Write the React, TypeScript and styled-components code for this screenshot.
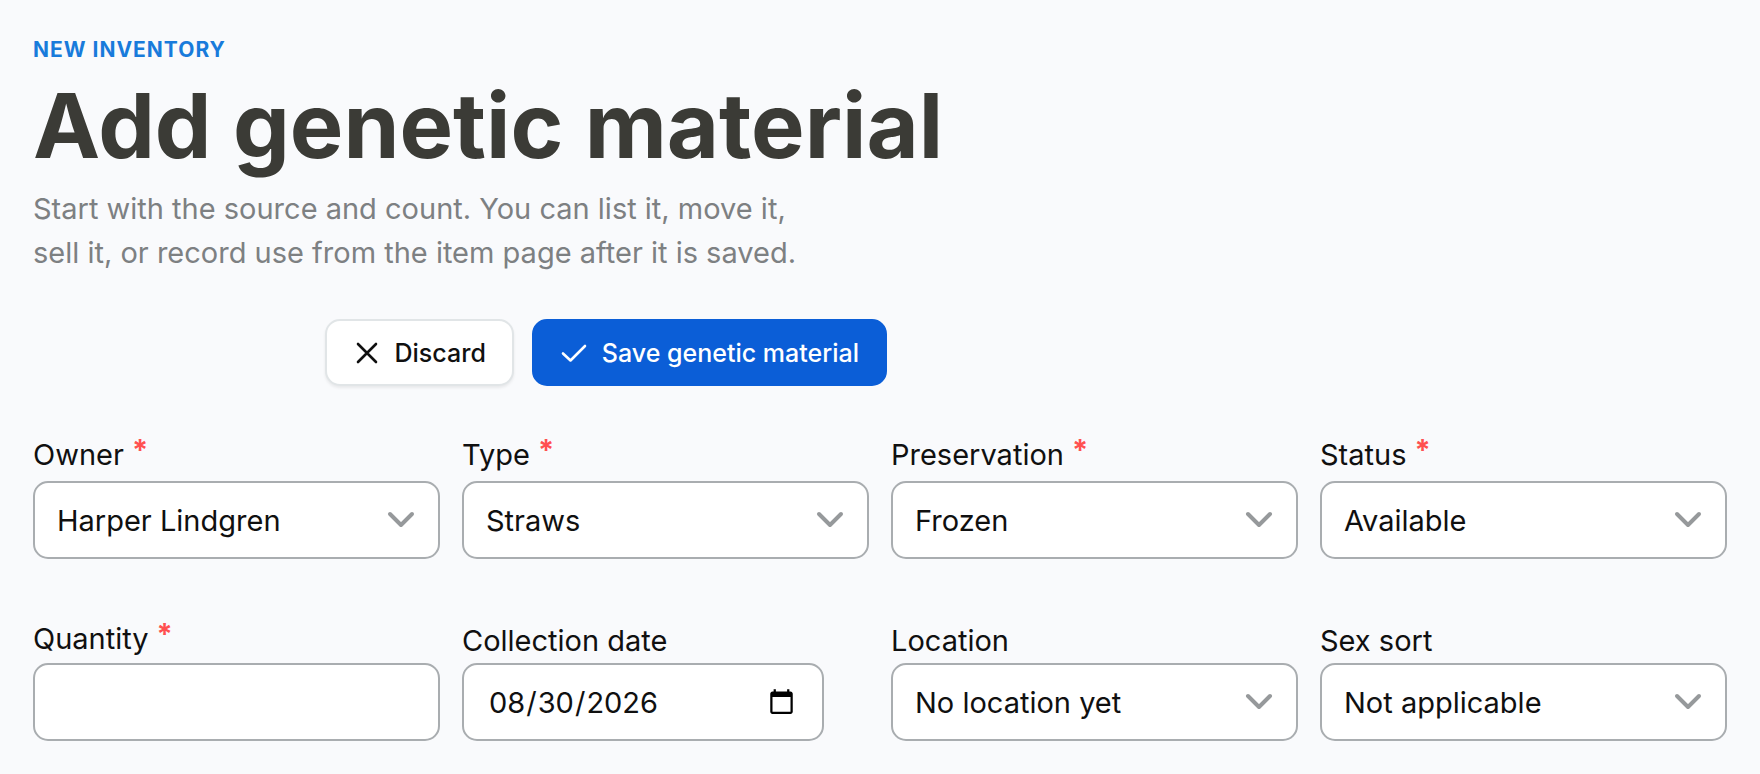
import React from "react";
import styled, { createGlobalStyle } from "styled-components";

const GlobalStyle = createGlobalStyle`
  *, *::before, *::after { box-sizing: border-box; }
  body {
    margin: 0;
    background: #f9fafc;
    color: #101010;
    font-family: Inter, "Liberation Sans", sans-serif;
    font-size: 29px;
  }
`;

const Page = styled.main`
  padding: 32px 33px;
`;

const Eyebrow = styled.p`
  margin: 0;
  color: #187bdb;
  font-size: 21px;
  line-height: 36px;
  font-weight: 700;
  letter-spacing: 1px;
  text-transform: uppercase;
`;

const Title = styled.h1`
  margin: 0;
  color: #3b3b36;
  font-size: 90px;
  line-height: 116px;
  font-weight: 700;
`;

const Lead = styled.p`
  margin: 3px 0 0;
  max-width: 780px;
  color: #7d8082;
  line-height: 44px;
`;

const Actions = styled.div`
  display: flex;
  justify-content: flex-end;
  gap: 18px;
  max-width: 854px;
  margin-top: 44px;
`;

const Button = styled.button<{ $primary?: boolean }>`
  display: flex;
  align-items: center;
  gap: 15px;
  height: 67px;
  padding: 0 26px 0 27px;
  border: 2px solid ${(p) => (p.$primary ? "#0b5ed7" : "#e1e5e7")};
  border-radius: 15px;
  background: ${(p) => (p.$primary ? "#0b5ed7" : "#ffffff")};
  box-shadow: ${(p) => (p.$primary ? "none" : "0 2px 3px rgba(0, 0, 0, 0.07)")};
  color: ${(p) => (p.$primary ? "#ffffff" : "#101010")};
  font-family: inherit;
  font-size: 25px;
  font-weight: 500;
  white-space: nowrap;
`;

const FieldRow = styled.div<{ $top: number }>`
  display: grid;
  grid-template-columns: repeat(4, minmax(0, 1fr));
  align-items: end;
  gap: 22px;
  margin-top: ${(p) => p.$top}px;
`;

const Field = styled.div<{ $gap: number }>`
  display: flex;
  flex-direction: column;
  gap: ${(p) => p.$gap}px;
`;

const Label = styled.label`
  display: flex;
  gap: 8px;
  line-height: 38px;
`;

const Required = styled.span`
  color: #ff5050;
  font-weight: 700;
  line-height: 28px;
`;

const Control = styled.div`
  position: relative;
`;

const Input = styled.input<{ $short?: boolean }>`
  display: block;
  width: ${(p) => (p.$short ? "89%" : "100%")};
  height: 78px;
  padding: 0 24px;
  border: 2px solid #a9adb0;
  border-radius: 15px;
  background: #ffffff;
  color: inherit;
  font: inherit;
`;

const Select = styled.select`
  display: block;
  width: 100%;
  height: 78px;
  padding: 0 70px 0 22px;
  appearance: none;
  border: 2px solid #a9adb0;
  border-radius: 15px;
  background: #ffffff;
  color: inherit;
  font: inherit;
`;

const Chevron = styled.svg`
  position: absolute;
  top: 30px;
  right: 25px;
  pointer-events: none;
`;

type SelectFieldProps = {
  id: string;
  label: string;
  value: string;
  required?: boolean;
  gap: number;
};

function FieldLabel({ id, text, required }: { id: string; text: string; required?: boolean }) {
  return (
    <Label htmlFor={id}>
      {text}
      {required && <Required>*</Required>}
    </Label>
  );
}

function SelectField({ id, label, value, required, gap }: SelectFieldProps) {
  return (
    <Field $gap={gap}>
      <FieldLabel id={id} text={label} required={required} />
      <Control>
        <Select id={id} defaultValue={value} required={required}>
          <option>{value}</option>
        </Select>
        <Chevron width="28" height="18" viewBox="0 0 28 18" fill="none" aria-hidden="true">
          <path d="M3 3L14 14L25 3" stroke="#96999b" strokeWidth="4" strokeLinecap="round" strokeLinejoin="round" />
        </Chevron>
      </Control>
    </Field>
  );
}

export default function App() {
  return (
    <>
      <GlobalStyle />
      <Page>
        <Eyebrow>New inventory</Eyebrow>
        <Title>Add genetic material</Title>
        <Lead>
          Start with the source and count. You can list it, move it, sell it, or record use from
          the item page after it is saved.
        </Lead>
        <form onSubmit={(e) => e.preventDefault()}>
          <Actions>
            <Button type="button">
              <svg width="26" height="26" viewBox="0 0 26 26" fill="none" aria-hidden="true">
                <path d="M4 4L22 22M22 4L4 22" stroke="currentColor" strokeWidth="2.6" strokeLinecap="round" />
              </svg>
              Discard
            </Button>
            <Button type="submit" $primary>
              <svg width="26" height="26" viewBox="0 0 26 26" fill="none" aria-hidden="true">
                <path d="M2 13.500L9.500 20.500L24 6" stroke="currentColor" strokeWidth="2.6" strokeLinecap="round" strokeLinejoin="round" />
              </svg>
              Save genetic material
            </Button>
          </Actions>
          <FieldRow $top={50}>
            <SelectField id="owner" label="Owner" value="Harper Lindgren" required gap={7} />
            <SelectField id="type" label="Type" value="Straws" required gap={7} />
            <SelectField id="preservation" label="Preservation" value="Frozen" required gap={7} />
            <SelectField id="status" label="Status" value="Available" required gap={7} />
          </FieldRow>
          <FieldRow $top={61}>
            <Field $gap={5}>
              <FieldLabel id="quantity" text="Quantity" required />
              <Input id="quantity" type="text" inputMode="numeric" required />
            </Field>
            <Field $gap={3}>
              <FieldLabel id="collected" text="Collection date" />
              <Input id="collected" type="date" defaultValue="2026-08-30" $short />
            </Field>
            <SelectField id="location" label="Location" value="No location yet" gap={3} />
            <SelectField id="sex-sort" label="Sex sort" value="Not applicable" gap={3} />
          </FieldRow>
        </form>
      </Page>
    </>
  );
}
